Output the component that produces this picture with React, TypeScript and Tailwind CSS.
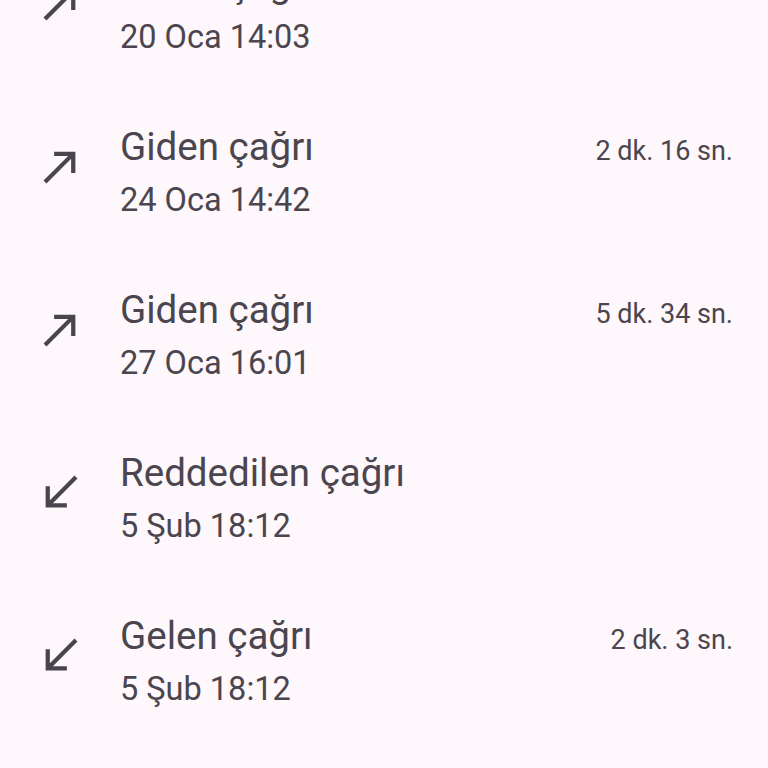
import React from "react";

const Out = () => (
  <svg width="51" height="51" viewBox="0 0 24 24" fill="#49454f">
    <path d="M9 5v2h6.59L4 18.59 5.41 20 17 8.41V15h2V5z" />
  </svg>
);
const In = () => (
  <svg width="51" height="51" viewBox="0 0 24 24" fill="#49454f">
    <path d="M20 5.41L18.59 4 7 15.59V9H5v10h10v-2H8.41z" />
  </svg>
);

const rows = [
  { out: true, title: "Giden çağrı", date: "20 Oca 14:03", dur: "" },
  { out: true, title: "Giden çağrı", date: "24 Oca 14:42", dur: "2 dk. 16 sn." },
  { out: true, title: "Giden çağrı", date: "27 Oca 16:01", dur: "5 dk. 34 sn." },
  { out: false, title: "Reddedilen çağrı", date: "5 Şub 18:12", dur: "" },
  { out: false, title: "Gelen çağrı", date: "5 Şub 18:12", dur: "2 dk. 3 sn." },
];

export default function App() {
  return (
    <div
      className="w-[768px] h-[768px] overflow-hidden bg-[#fef7fb] text-[#4a454e]"
      style={{ fontFamily: "Roboto, 'Noto Sans', sans-serif" }}
    >
      <div className="mt-[-71px] flex flex-col">
        {rows.map((r, i) => (
          <div key={i} className="h-[163px] flex items-center pl-[35px] pr-[35px]">
            <div className="w-[51px] shrink-0 mb-[14px]">{r.out ? <Out /> : <In />}</div>
            <div className="ml-[34px] flex-1 flex flex-col">
              <div className="flex items-baseline justify-between">
                <span className="text-[38.5px] leading-[52px]">{r.title}</span>
                {r.dur && <span className="text-[27px]">{r.dur}</span>}
              </div>
              <span className="text-[32.5px] leading-[54px]">{r.date}</span>
            </div>
          </div>
        ))}
      </div>
    </div>
  );
}
